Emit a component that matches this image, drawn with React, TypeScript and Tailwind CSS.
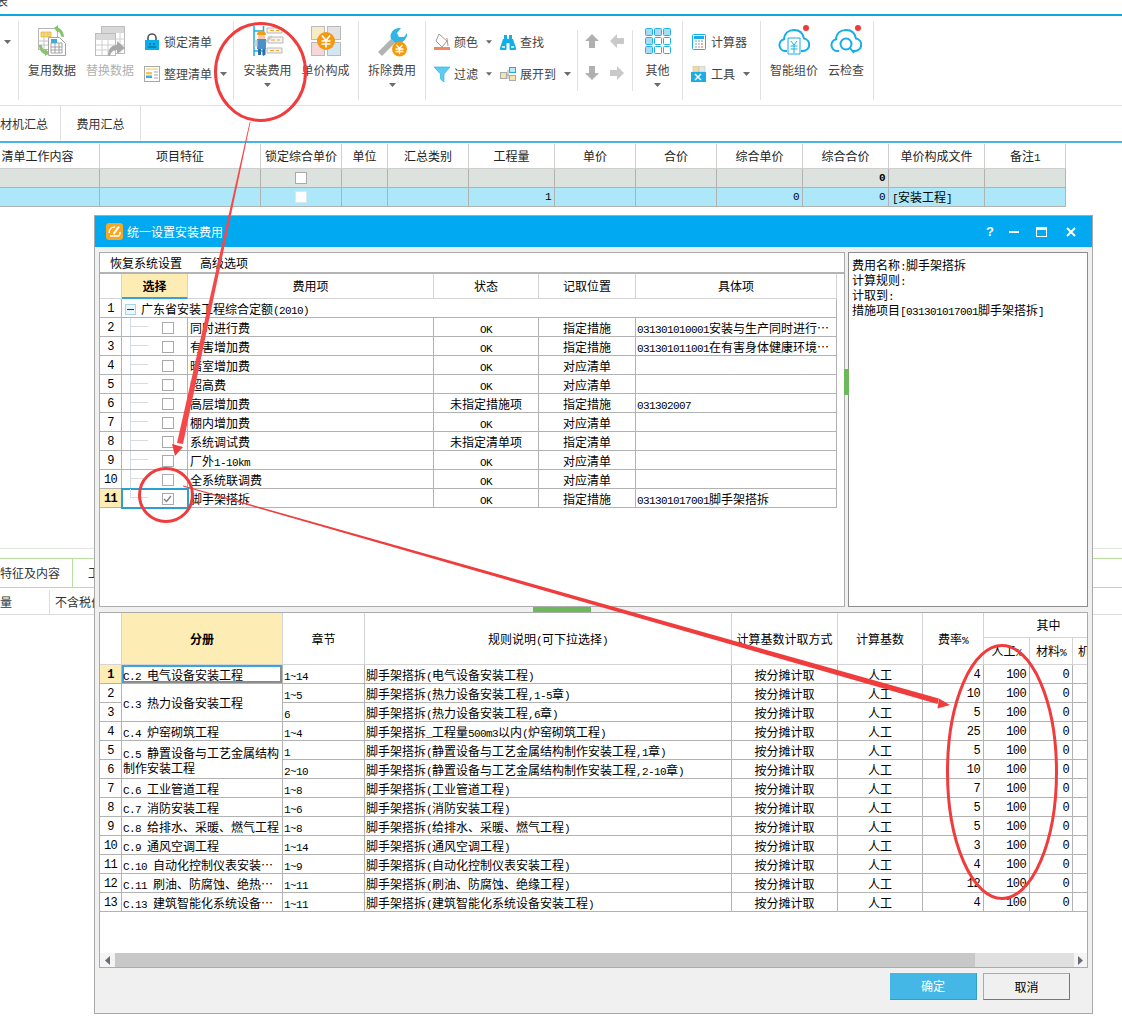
import React from 'react';

const mono = "font-['Liberation_Mono',monospace] text-[11px] tracking-[-0.6px]";

const Txt = ({ t }: { t: string }) => (
  <>
    {t.split(/([\x20-\x7e]+)/).map((s, i) =>
      /^[\x20-\x7e]+$/.test(s) ? (
        <span key={i} className={`${mono} leading-none whitespace-pre`}>
          {s}
        </span>
      ) : (
        s
      ),
    )}
  </>
);

const Caret = ({ className = '' }: { className?: string }) => (
  <svg width="7" height="4" viewBox="0 0 7 4" className={className}>
    <path d="M0 0h7L3.5 4z" fill="#6b6b6b" />
  </svg>
);

/* ribbon icons */
const ReuseIcon = () => (
  <svg width="32" height="32" viewBox="0 0 32 32" fill="none">
    <rect x="2.5" y="3.5" width="19" height="21" fill="#fff" stroke="#b5b5b5" />
    <path d="M5 7h10v5H5z" fill="#ffd75e" stroke="#e9ae1f" strokeWidth=".7" />
    <path d="M8 7v5M12 7v5M3 16h18M3 20h9M8 12v12" stroke="#c5c5c5" />
    <path d="M20 2c5 1 8 5 8 10l-3-.5c0-3-2-5-5-6z" fill="#86c56c" />
    <path d="M18 3l4-3v8z" fill="#86c56c" />
    <path d="M3 20c0 5 3 9 8 10l1-3c-3-1-6-3-6-7z" fill="#86c56c" />
    <path d="M14 28l-5 3v-7z" fill="#86c56c" />
    <path d="M12.5 12.5h11l6 6v12h-17z" fill="#fff" stroke="#a5a5a5" />
    <path d="M15 14h6v4h-6z" fill="#2eb2e6" />
    <path d="M15 18h11v10H15zM19 18v10M23 18v10M15 22h11M15 25h11" stroke="#8f8f8f" strokeWidth=".8" />
  </svg>
);
const ReplaceIcon = () => (
  <svg width="32" height="32" viewBox="0 0 32 32" fill="none">
    <rect x="7.5" y="1.5" width="23" height="27" fill="#fff" stroke="#bdbdbd" />
    <path d="M8 2h22v6H8z" fill="#d8d8d8" />
    <rect x="1.5" y="8.5" width="20" height="22" fill="#fff" stroke="#bdbdbd" />
    <path d="M2 9h19v6H2z" fill="#d8d8d8" />
    <path d="M2 20h19M2 25h19M8 15v15M14 15v15M22 14h8M22 20h8M26 8v20" stroke="#cfcfcf" />
    <path d="M14 31c0-7 3-11 9-11v-4l8 7-8 6v-4c-4 0-6 2-7 6z" fill="#a9a9a9" />
  </svg>
);
const LockIcon = () => (
  <svg width="16" height="18" viewBox="0 0 16 18" fill="none">
    <path d="M4 8V5a4 4 0 018 0v3" stroke="#555" strokeWidth="1.6" />
    <rect x="1" y="7" width="14" height="10" fill="#08aeea" />
    <path d="M5 11h2M9 11h2M4 14h8" stroke="#045e84" />
  </svg>
);
const ArrangeIcon = () => (
  <svg width="16" height="16" viewBox="0 0 16 16" fill="none">
    <rect x=".5" y=".5" width="15" height="15" fill="#fff" stroke="#a8a8a8" />
    <path d="M2 2h12v2H2z" fill="#f5e3ad" />
    <path d="M2 6h6v2.500H2z" fill="#f1c75c" />
    <path d="M2 9.500h6V12H2z" fill="#35b2e5" />
    <path d="M10 6h4M10 9h4M10 12h4" stroke="#c4c4c4" strokeWidth="1.500" />
  </svg>
);
const InstallIcon = () => (
  <svg width="32" height="32" viewBox="0 0 32 32" fill="none">
    <path d="M2 1v30M11.500 1v8M11.500 22v9M2 6h9M2 16h3M2 26h9" stroke="#16aee8" strokeWidth="1.500" />
    <path d="M15 3h15v5H15zM16 12h15v6H16zM15 23h15v5H15z" fill="#f3f3f3" stroke="#b9b9b9" />
    <path d="M18 5.500h4M24 5.500h3M19 15h4M25 15h3M18 25.500h4M24 25.500h3" stroke="#f5a623" />
    <path d="M5 10a4.500 4.500 0 019 0z" fill="#f19b1f" />
    <rect x="6" y="10" width="7" height="4" fill="#f4c9a5" />
    <path d="M5 14h9v10H5z" fill="#4a90c9" />
    <path d="M2.500 15h3v7h-3z" fill="#d2d2d2" />
    <path d="M14 17l6-6" stroke="#c9c9c9" strokeWidth="2" />
    <path d="M6 24h3v6H6zM10.500 24h3v6h-3z" fill="#2a6ea5" />
  </svg>
);
const UnitPriceIcon = () => (
  <svg width="32" height="32" viewBox="0 0 32 32" fill="none">
    <rect x="1.500" y="1.500" width="13" height="13" fill="#f6ebc4" stroke="#bbb" />
    <rect x="17.500" y="1.500" width="13" height="13" fill="#e2e2e2" stroke="#bbb" />
    <rect x="1.500" y="17.500" width="13" height="13" fill="#f5d7d7" stroke="#bbb" />
    <rect x="17.500" y="17.500" width="13" height="13" fill="#d3e6f1" stroke="#bbb" />
    <circle cx="16" cy="16" r="9" fill="#f59a0f" />
    <path d="M12 10.500l4 5 4-5M11.500 16h9M11.500 19h9M16 16v6.500" stroke="#fff" strokeWidth="1.600" />
  </svg>
);
const RemoveIcon = () => (
  <svg width="32" height="32" viewBox="0 0 32 32" fill="none">
    <path d="M2 27L15 14l4 4L6 31z" fill="#b3b3b3" />
    <path d="M15 14c-2-6 3-12 10-11l-4 5 2 4 5 0 3-4c1 6-6 12-12 10z" fill="#2fb6e6" />
    <circle cx="23.500" cy="24" r="7.500" fill="#f59a0f" />
    <path d="M20.500 20l3 3.500 3-3.500M19.500 24h8M19.500 26.500h8M23.500 23.500v5.500" stroke="#fff" strokeWidth="1.300" />
  </svg>
);
const BucketIcon = () => (
  <svg width="16" height="18" viewBox="0 0 16 18" fill="none">
    <path d="M5 1l8 7-5 6-6-6z" fill="#fff" stroke="#9b9b9b" />
    <path d="M13 5l1 8" stroke="#e08a5c" />
    <path d="M0 14h16v3H0z" fill="#f5875a" />
  </svg>
);
const BinocularIcon = () => (
  <svg width="16" height="16" viewBox="0 0 16 16" fill="#12aee8">
    <path d="M4 1h3v5H4zM9 1h3v5H9zM6 5h4v4H6z" />
    <path d="M3 5h3.500v9.500A2.500 2.500 0 010 14zM9.500 5H13l3 9a2.500 2.500 0 01-6.500.5z" />
    <path d="M2 12h3v2H2zM11 12h3v2h-3z" fill="#bfeafa" />
  </svg>
);
const FilterIcon = () => (
  <svg width="16" height="16" viewBox="0 0 16 16">
    <path d="M0 1h16L10 8v8L6.500 13V8z" fill="#5ecbf2" stroke="#14aee8" strokeWidth=".6" />
  </svg>
);
const ExpandIcon = () => (
  <svg width="16" height="16" viewBox="0 0 16 16" fill="none">
    <rect x=".5" y="6.500" width="6" height="6" fill="#f3e3b0" stroke="#aaa" />
    <rect x="9.500" y="1.500" width="6" height="5" fill="#bfe7f7" stroke="#19aee6" />
    <rect x="9.500" y="9.500" width="6" height="5" fill="#f3e3b0" stroke="#aaa" />
    <path d="M7 9h2M8 4v9" stroke="#aaa" />
  </svg>
);
const BlockArrow = ({ dir, color }: { dir: 'up' | 'down' | 'left' | 'right'; color: string }) => {
  const rot = { up: 0, right: 90, down: 180, left: 270 }[dir];
  return (
    <svg width="16" height="16" viewBox="0 0 16 16">
      <path d="M8 1l7 7h-4v7H5V8H1z" fill={color} transform={`rotate(${rot} 8 8)`} />
    </svg>
  );
};
const GridIcon = () => (
  <svg width="26" height="26" viewBox="0 0 26 26" stroke="#1fb0e8">
    {[0, 9, 18].map((y) =>
      [0, 9, 18].map((x) => (
        <rect
          key={`${x}-${y}`}
          x={x + 0.5}
          y={y + 0.5}
          width="7"
          height="7"
          rx="1"
          fill={(x === 9 && y === 9) || (x === 18 && y === 9) || (x > 0 && y === 18) ? '#fff' : '#a9dcf3'}
        />
      )),
    )}
  </svg>
);
const CalcIcon = () => (
  <svg width="14" height="16" viewBox="0 0 14 16" fill="none">
    <rect x=".5" y=".5" width="13" height="15" rx="1" fill="#fff" stroke="#19aee6" />
    <path d="M2 2h10v3H2z" fill="#19aee6" />
    <path d="M3 7h2M6 7h2M9 7h2M3 10h2M6 10h2M3 13h2M6 13h2" stroke="#8b9aa5" strokeWidth="1.200" />
    <path d="M9 10h2M9 13h2" stroke="#e8643c" strokeWidth="1.200" />
  </svg>
);
const ToolIcon = () => (
  <svg width="16" height="16" viewBox="0 0 16 16" fill="none">
    <path d="M2 0h6v6H2z" fill="#f1d9a0" stroke="#bbb" strokeWidth=".5" />
    <path d="M8 0h6v6H8z" fill="#e5e5e5" stroke="#bbb" strokeWidth=".5" />
    <path d="M0 6h15v10H0z" fill="#19aee6" />
    <path d="M4 8l6 6M10 8l-6 6" stroke="#fff" strokeWidth="1.500" />
  </svg>
);
const CloudBase = ({ children }: { children: React.ReactNode }) => (
  <svg width="32" height="32" viewBox="0 0 32 32" fill="none">
    <path
      d="M9 26H7a6 6 0 01-1-11.800C6.500 8 11 5 16 5c5 0 9 3 10 8.500a6.300 6.300 0 01-1 12.500h-2"
      stroke="#14aee8"
      strokeWidth="2"
    />
    {children}
    <circle cx="28" cy="3" r="3" fill="#f03a3a" />
  </svg>
);
const SmartPriceIcon = () => (
  <CloudBase>
    <path d="M10 29V13h12v16z" stroke="#14aee8" />
    <path d="M13 16l3 4 3-4M12.500 21h7M12.500 24h7M16 20v8" stroke="#14aee8" />
  </CloudBase>
);
const CloudCheckIcon = () => (
  <CloudBase>
    <circle cx="16" cy="19" r="5.500" stroke="#14aee8" strokeWidth="2" />
    <path d="M20 23l4 5" stroke="#14aee8" strokeWidth="2" />
  </CloudBase>
);

/* ribbon parts */
const Group = ({ className, children }: { className: string; children: React.ReactNode }) => (
  <div className={`flex h-[79px] shrink-0 border-r border-[#e2e2e2] ${className}`}>{children}</div>
);
const LargeBtn = ({
  icon,
  label,
  width,
  caret,
  muted,
}: {
  icon: React.ReactNode;
  label: string;
  width: string;
  caret?: boolean;
  muted?: boolean;
}) => (
  <div className={`flex flex-col items-center pt-[4px] ${width}`}>
    <div className="h-[32px] flex items-center justify-center">{icon}</div>
    <div className={`mt-[5px] text-[12px] leading-[16px] whitespace-nowrap ${muted ? 'text-[#b0b0b0]' : 'text-[#444]'}`}>
      {label}
    </div>
    {caret && <Caret className="mt-[5px]" />}
  </div>
);
const SmallBtn = ({
  icon,
  label,
  caret,
  className = '',
}: {
  icon: React.ReactNode;
  label: string;
  caret?: boolean;
  className?: string;
}) => (
  <div className={`flex h-[16px] items-center text-[12px] leading-[16px] text-[#444] whitespace-nowrap ${className}`}>
    <span className="w-[16px] flex justify-center shrink-0">{icon}</span>
    <span className="ml-[4px]">{label}</span>
    {caret && <Caret className="ml-[8px]" />}
  </div>
);

/* main grid */
const mainCols = [124, 161, 81, 46, 81, 86, 81, 81, 86, 86, 96, 81];
const mainHead = ['清单工作内容', '项目特征', '锁定综合单价', '单位', '汇总类别', '工程量', '单价', '合价', '综合单价', '综合合价', '单价构成文件', '备注1'];

const Check = ({ on, light }: { on?: boolean; light?: boolean }) => (
  <span className={`inline-flex h-[12px] w-[12px] items-center justify-center border bg-white align-middle ${light ? 'border-[#d8e8ee]' : 'border-[#a9a9a9]'}`}>
    {on && (
      <svg width="9" height="8" viewBox="0 0 9 8" fill="none">
        <path d="M1 4l2.500 2.500L8 1" stroke="#7c7c8c" strokeWidth="1.300" />
      </svg>
    )}
  </span>
);

const MainRow = ({ bg, cells }: { bg: string; cells: React.ReactNode[] }) => (
  <tr className={bg}>
    {cells.map((c, i) => (
      <td key={i} className="h-[19px] border-r border-b border-[#b2b2b2] p-0 px-[3px] text-[12px] leading-[14px] whitespace-nowrap">
        {c}
      </td>
    ))}
  </tr>
);

/* dialog upper grid */
const feeRows = [
  ['同时进行费', 'OK', '指定措施', '031301010001安装与生产同时进行⋯'],
  ['有害增加费', 'OK', '指定措施', '031301011001在有害身体健康环境⋯'],
  ['暗室增加费', 'OK', '对应清单', ''],
  ['超高费', 'OK', '对应清单', ''],
  ['高层增加费', '未指定措施项', '指定措施', '031302007'],
  ['棚内增加费', 'OK', '对应清单', ''],
  ['系统调试费', '未指定清单项', '指定清单', ''],
  ['厂外1-10km', 'OK', '对应清单', ''],
  ['全系统联调费', 'OK', '对应清单', ''],
  ['脚手架搭拆', 'OK', '指定措施', '031301017001脚手架搭拆'],
];
const cell = 'h-[19px] p-0 pt-[2px] border-r border-b border-[#b2b2b2] text-[12px] leading-[14px] whitespace-nowrap overflow-hidden';
const headCell = 'p-0 border-r border-b border-[#d4d4d4] text-[12px] leading-[16px] text-center font-normal';

/* dialog lower grid */
const ruleRows: [string | null, number, string, string, number][] = [
  ['C.2 电气设备安装工程', 1, '1~14', '脚手架搭拆(电气设备安装工程)', 4],
  ['C.3 热力设备安装工程', 2, '1~5', '脚手架搭拆(热力设备安装工程,1-5章)', 10],
  [null, 0, '6', '脚手架搭拆(热力设备安装工程,6章)', 5],
  ['C.4 炉窑砌筑工程', 1, '1~4', '脚手架搭拆_工程量500m3以内(炉窑砌筑工程)', 25],
  ['C.5 静置设备与工艺金属结构制作安装工程', 2, '1', '脚手架搭拆(静置设备与工艺金属结构制作安装工程,1章)', 5],
  [null, 0, '2~10', '脚手架搭拆(静置设备与工艺金属结构制作安装工程,2-10章)', 10],
  ['C.6 工业管道工程', 1, '1~8', '脚手架搭拆(工业管道工程)', 7],
  ['C.7 消防安装工程', 1, '1~6', '脚手架搭拆(消防安装工程)', 5],
  ['C.8 给排水、采暖、燃气工程', 1, '1~8', '脚手架搭拆(给排水、采暖、燃气工程)', 5],
  ['C.9 通风空调工程', 1, '1~14', '脚手架搭拆(通风空调工程)', 3],
  ['C.10 自动化控制仪表安装⋯', 1, '1~9', '脚手架搭拆(自动化控制仪表安装工程)', 4],
  ['C.11 刷油、防腐蚀、绝热⋯', 1, '1~11', '脚手架搭拆(刷油、防腐蚀、绝缘工程)', 12],
  ['C.13 建筑智能化系统设备⋯', 1, '1~11', '脚手架搭拆(建筑智能化系统设备安装工程)', 4],
];

const Annotations = () => (
  <svg className="absolute left-0 top-0 pointer-events-none" width="1122" height="1022" viewBox="0 0 1122 1022" fill="none">
    <ellipse cx="260.500" cy="72" rx="45" ry="48.500" stroke="#f03c3c" strokeWidth="3" />
    <path d="M249.700 122h.8L183 444l-6-1z" fill="#f4484a" />
    <path d="M175 456l-3-12 11 3z" fill="#f03c3c" />
    <ellipse cx="166" cy="495" rx="26.500" ry="26.500" stroke="#f03c3c" strokeWidth="3" />
    <path d="M183 486.500l.3-1L938.800 698.500l-1.300 5.500z" fill="#f03c3c" />
    <path d="M950 705l-11-6.500-1.500 10z" fill="#f03c3c" />
    <ellipse cx="1002" cy="772" rx="54.500" ry="126.500" stroke="#f03c3c" strokeWidth="3" />
  </svg>
);

export default function App() {
  return (
    <div className="relative h-[1022px] w-[1122px] overflow-hidden bg-white font-['Noto_Sans_CJK_SC','Liberation_Sans',sans-serif] text-black">
      {/* title strip */}
      <div className="h-[14px] overflow-hidden">
        <div className="-ml-[4px] -mt-[7px] text-[12px] leading-[16px] text-[#333]">表</div>
      </div>
      <div className="h-[2px] bg-[#0ca6e2]" />

      {/* ribbon */}
      <div className="flex h-[90px] items-start border-b border-[#e0e0e0] pt-[5px]">
        <Group className="w-[19px] items-center pb-[37px] pl-[4px]">
          <Caret />
        </Group>
        <Group className="w-[215px] pl-[4px]">
          <LargeBtn icon={<ReuseIcon />} label="复用数据" width="w-[58px]" />
          <LargeBtn icon={<ReplaceIcon />} label="替换数据" width="w-[58px]" muted />
          <div className="ml-[5px] flex flex-col gap-[16px] pt-[13px]">
            <SmallBtn icon={<LockIcon />} label="锁定清单" />
            <SmallBtn icon={<ArrangeIcon />} label="整理清单" caret />
          </div>
        </Group>
        <Group className="w-[125px]">
          <LargeBtn icon={<InstallIcon />} label="安装费用" width="w-[67px]" caret />
          <LargeBtn icon={<UnitPriceIcon />} label="单价构成" width="w-[49px]" />
        </Group>
        <Group className="w-[67px]">
          <LargeBtn icon={<RemoveIcon />} label="拆除费用" width="w-[67px]" caret />
        </Group>
        <div className="flex h-[79px] w-[151px] shrink-0 gap-[8px] pl-[8px] pt-[13px]">
          <div className="flex w-[58px] flex-col gap-[16px]">
            <SmallBtn icon={<BucketIcon />} label="颜色" caret />
            <SmallBtn icon={<FilterIcon />} label="过滤" caret />
          </div>
          <div className="flex flex-col gap-[16px]">
            <SmallBtn icon={<BinocularIcon />} label="查找" />
            <SmallBtn icon={<ExpandIcon />} label="展开到" caret />
          </div>
        </div>
        <div className="mt-[9px] grid h-[61px] w-[55px] shrink-0 grid-cols-[16px_16px] content-start gap-x-[9px] gap-y-[16px] border-l border-[#e2e2e2] pl-[6px] pt-[3px]">
          <BlockArrow dir="up" color="#b0b0b0" />
          <BlockArrow dir="left" color="#c9c9c9" />
          <BlockArrow dir="down" color="#b0b0b0" />
          <BlockArrow dir="right" color="#c9c9c9" />
        </div>
        <div className="mt-[9px] h-[61px] w-0 shrink-0 border-l border-[#e2e2e2]" />
        <Group className="w-[50px]">
          <LargeBtn icon={<GridIcon />} label="其他" width="w-[49px]" caret />
        </Group>
        <Group className="w-[78px] pl-[8px]">
          <div className="flex flex-col gap-[16px] pt-[13px]">
            <SmallBtn icon={<CalcIcon />} label="计算器" />
            <SmallBtn icon={<ToolIcon />} label="工具" caret />
          </div>
        </Group>
        <Group className="w-[113px]">
          <LargeBtn icon={<SmartPriceIcon />} label="智能组价" width="w-[66px]" />
          <LargeBtn icon={<CloudCheckIcon />} label="云检查" width="w-[38px]" />
        </Group>
      </div>

      {/* tabs */}
      <div className="flex h-[35px] text-[12px] leading-[35px] text-[#333]">
        <div className="w-[61px] shrink-0 overflow-hidden border-r border-[#e2e2e2] pr-[16px] text-right whitespace-nowrap">材机汇总</div>
        <div className="w-[80px] shrink-0 border-r border-[#e2e2e2] text-center">费用汇总</div>
      </div>
      <div className="mb-[1px] h-[2px] bg-[#4ab5e3]" />

      {/* main grid */}
      <table className="-ml-[24px] table-fixed border-separate border-spacing-0 w-[1090px]">
        <colgroup>
          {mainCols.map((w, i) => (
            <col key={i} style={{ width: w }} />
          ))}
        </colgroup>
        <thead>
          <tr>
            {mainHead.map((h) => (
              <th key={h} className="h-[25px] border-r border-b border-[#cfcfcf] p-0 text-center text-[12px] leading-[16px] font-normal whitespace-nowrap text-[#222]">
                <Txt t={h} />
              </th>
            ))}
          </tr>
        </thead>
        <tbody>
          <MainRow
            bg="bg-[#dce3df]"
            cells={['', '', <div className="flex justify-center"><Check /></div>, '', '', '', '', '', '', <div className={`text-right font-bold ${mono}`}>0</div>, '', '']}
          />
          <MainRow
            bg="bg-[#ade7fa]"
            cells={[
              '',
              '',
              <div className="flex justify-center"><Check light /></div>,
              '',
              '',
              <div className={`text-right ${mono}`}>1</div>,
              '',
              '',
              <div className={`text-right ${mono}`}>0</div>,
              <div className={`text-right ${mono}`}>0</div>,
              <Txt t="[安装工程]" />,
              '',
            ]}
          />
        </tbody>
      </table>

      {/* lower pane behind the dialog */}
      <div className="mt-[341px] border-t border-[#e5e5e5] pt-[9px]">
        <div className="flex h-[30px] border-y border-[#b7dfa0] text-[12px] leading-[28px] text-[#333]">
          <div className="w-[73px] shrink-0 overflow-hidden border-r border-[#b7dfa0] pr-[16px] text-right whitespace-nowrap">特征及内容</div>
          <div className="pl-[15px]">工程</div>
        </div>
        <div className="mt-[2px] flex h-[25px] border-b border-[#dcdcdc] text-[12px] leading-[24px] text-[#333]">
          <div className="w-[50px] shrink-0 border-r border-[#dcdcdc]">量</div>
          <div className="pl-[5px] whitespace-nowrap">不含税价</div>
        </div>
      </div>

      {/* dialog */}
      <div className="absolute left-[94px] top-[215px] flex h-[799px] w-[999px] flex-col border border-[#a9a9a9] bg-[#f0f0f0]">
        <div className="flex h-[31px] shrink-0 items-center bg-[#00a9f0] pl-[11px] text-white">
          <svg width="17" height="17" viewBox="0 0 17 17" fill="none">
            <rect width="17" height="17" rx="3" fill="#f7a823" />
            <path d="M3 10c0-4 3-6 6-6M4 13h8c2 0 2-2 2-4" stroke="#fff" strokeWidth="1.600" />
            <path d="M7 10l1 2 6-8-2-1z" fill="#fff" />
          </svg>
          <span className="ml-[4px] text-[12px] leading-[16px]">统一设置安装费用</span>
          <div className="ml-auto flex items-center pr-[16px]">
            <span className="mr-[15px] font-['Liberation_Sans',sans-serif] text-[13px] font-bold leading-[16px]">?</span>
            <span className="mr-[17px] h-[2px] w-[10px] bg-white" />
            <span className="mr-[19px] h-[10px] w-[11px] border border-t-[3px] border-white" />
            <svg width="10" height="10" viewBox="0 0 10 10">
              <path d="M1 1l8 8M9 1L1 9" stroke="#fff" strokeWidth="2" />
            </svg>
          </div>
        </div>

        <div className="flex min-h-0 flex-1 flex-col px-[4px] pt-[5px]">
          <div className="relative flex h-[355px] shrink-0">
            {/* fee list */}
            <div className="w-[746px] shrink-0 border border-[#ababab] bg-white">
              <div className="flex h-[21px] gap-[18px] border-b-2 border-[#b4b4b4] pl-[10px] text-[12px] leading-[19px]">
                <span>恢复系统设置</span>
                <span>高级选项</span>
              </div>
              <table className="w-[737px] table-fixed border-separate border-spacing-0">
                <colgroup>
                  <col className="w-[22px]" />
                  <col className="w-[66px]" />
                  <col className="w-[246px]" />
                  <col className="w-[105px]" />
                  <col className="w-[97px]" />
                  <col className="w-[201px]" />
                </colgroup>
                <thead>
                  <tr>
                    <th className={`${headCell} h-[25px]`} />
                    <th className="border-r border-b-2 border-r-[#d4d4d4] border-b-[#35a3d6] bg-[#fdecb4] p-0 text-center text-[12px] font-bold leading-[16px]">选择</th>
                    <th className={headCell}>费用项</th>
                    <th className={headCell}>状态</th>
                    <th className={headCell}>记取位置</th>
                    <th className={headCell}>具体项</th>
                  </tr>
                </thead>
                <tbody>
                  <tr>
                    <td className={`${cell} text-center ${mono}`}>1</td>
                    <td colSpan={5} className={cell}>
                      <div className="flex items-center pl-[3px]">
                        <span className="flex h-[11px] w-[11px] items-center justify-center border border-[#a8d4e4] bg-[#e9f6fb]">
                          <span className="h-px w-[7px] bg-[#333]" />
                        </span>
                        <span className="ml-[5px]"><Txt t="广东省安装工程综合定额(2010)" /></span>
                      </div>
                    </td>
                  </tr>
                  {feeRows.map((r, i) => {
                    const last = i === feeRows.length - 1;
                    return (
                      <tr key={i}>
                        <td className={`${cell} text-center ${mono} ${last ? 'bg-[#fdecb4] font-bold' : ''}`}>{i + 2}</td>
                        <td className={`${cell} relative ${last ? 'outline-2 -outline-offset-1 outline-[#2a9fd0]' : ''}`}>
                          <span className={`absolute left-[8px] top-0 w-px bg-[#d3dde2] ${last ? 'h-[9px]' : 'h-full'}`} />
                          <span className="absolute left-[9px] top-[8px] h-px w-[17px] bg-[#dadada]" />
                          <div className="flex justify-center pl-[26px]"><Check on={last} /></div>
                        </td>
                        <td className={`${cell} pl-[2px]`}><Txt t={r[0]} /></td>
                        <td className={`${cell} text-center`}><Txt t={r[1]} /></td>
                        <td className={`${cell} text-center`}><Txt t={r[2]} /></td>
                        <td className={`${cell} pl-[1px]`}><Txt t={r[3]} /></td>
                      </tr>
                    );
                  })}
                </tbody>
              </table>
            </div>
            <div className="absolute left-[745px] top-[117px] h-[26px] w-[5px] bg-[#6cb85c]" />
            {/* description */}
            <div className="ml-[3px] flex-1 border border-[#8c8c8c] bg-white pl-[3px] pt-[5px] text-[12px] leading-[13px]">
              <div><Txt t="费用名称:脚手架搭拆" /></div>
              <div><Txt t="计算规则:" /></div>
              <div><Txt t="计取到:" /></div>
              <div><Txt t="措施项目[031301017001脚手架搭拆]" /></div>
            </div>
          </div>

          {/* splitter */}
          <div className="h-[5px] shrink-0 pl-[434px]">
            <div className="h-full w-[58px] bg-[#6cb85c]" />
          </div>

          {/* rule grid */}
          <div className="flex h-[356px] shrink-0 flex-col overflow-hidden border border-[#ababab] bg-white">
            <div className="flex-1 overflow-hidden">
              <table className="w-[1014px] table-fixed border-separate border-spacing-0">
                <colgroup>
                  <col className="w-[22px]" />
                  <col className="w-[161px]" />
                  <col className="w-[82px]" />
                  <col className="w-[367px]" />
                  <col className="w-[106px]" />
                  <col className="w-[85px]" />
                  <col className="w-[61px]" />
                  <col className="w-[46px]" />
                  <col className="w-[43px]" />
                  <col className="w-[41px]" />
                </colgroup>
                <thead>
                  <tr>
                    <th rowSpan={2} className={headCell} />
                    <th rowSpan={2} className="border-r border-b border-[#d4d4d4] bg-[#fdecb4] p-0 text-center text-[12px] font-bold leading-[16px]">分册</th>
                    <th rowSpan={2} className={headCell}>章节</th>
                    <th rowSpan={2} className={headCell}><Txt t="规则说明(可下拉选择)" /></th>
                    <th rowSpan={2} className={`${headCell} whitespace-nowrap`}>计算基数计取方式</th>
                    <th rowSpan={2} className={headCell}>计算基数</th>
                    <th rowSpan={2} className={headCell}><Txt t="费率%" /></th>
                    <th colSpan={3} className={`${headCell} h-[25px]`}>其中</th>
                  </tr>
                  <tr>
                    <th className={`${headCell} h-[27px]`}><Txt t="人工%" /></th>
                    <th className={headCell}><Txt t="材料%" /></th>
                    <th className={headCell}><Txt t="机械%" /></th>
                  </tr>
                </thead>
                <tbody>
                  {ruleRows.map((r, i) => (
                    <tr key={i}>
                      <td className={`${cell} text-center ${mono} ${i === 0 ? 'bg-[#fdecb4] font-bold' : ''}`}>{i + 1}</td>
                      {r[0] !== null && (
                        <td
                          rowSpan={r[1]}
                          className={`h-[19px] border-r border-b border-[#b2b2b2] p-0 pl-[1px] pt-[2px] text-[12px] leading-[14px] ${r[0].length > 16 && r[1] === 2 ? 'whitespace-normal break-all' : 'whitespace-nowrap'} ${i === 0 ? 'shadow-[inset_2px_2px_0_#3aa6d8,inset_-2px_-2px_0_#8c8c8c]' : ''}`}
                        >
                          <Txt t={r[0]} />
                        </td>
                      )}
                      <td className={`${cell} pl-[1px]`}><Txt t={r[2]} /></td>
                      <td className={`${cell} pl-[1px]`}><Txt t={r[3]} /></td>
                      <td className={`${cell} text-center`}>按分摊计取</td>
                      <td className={`${cell} text-center`}>人工</td>
                      <td className={`${cell} pr-[3px] text-right ${mono}`}>{r[4]}</td>
                      <td className={`${cell} pr-[3px] text-right ${mono}`}>100</td>
                      <td className={`${cell} pr-[3px] text-right ${mono}`}>0</td>
                      <td className={cell} />
                    </tr>
                  ))}
                </tbody>
              </table>
            </div>
            {/* horizontal scrollbar */}
            <div className="flex h-[14px] shrink-0 items-stretch bg-[#e0e0e0]">
              <div className="flex w-[15px] items-center justify-center bg-[#f4f4f4]">
                <svg width="5" height="9" viewBox="0 0 5 9"><path d="M5 0v9L0 4.500z" fill="#6b6b78" /></svg>
              </div>
              <div className="w-[860px] bg-[#c8c8c8]" />
              <div className="ml-auto flex w-[13px] items-center justify-center bg-[#f4f4f4]">
                <svg width="5" height="9" viewBox="0 0 5 9"><path d="M0 0v9l5-4.500z" fill="#6b6b78" /></svg>
              </div>
            </div>
          </div>

          {/* buttons */}
          <div className="flex justify-end gap-[6px] pr-[18px] pt-[5px]">
            <button className="h-[27px] w-[87px] border-r border-b border-[#2f9fd0] bg-[#45b7e6] text-[12px] text-white">确定</button>
            <button className="h-[27px] w-[87px] border border-[#aaa] border-r-[#777] border-b-[#777] bg-[#f0f0f0] text-[12px]">取消</button>
          </div>
        </div>
      </div>

      <Annotations />
    </div>
  );
}
